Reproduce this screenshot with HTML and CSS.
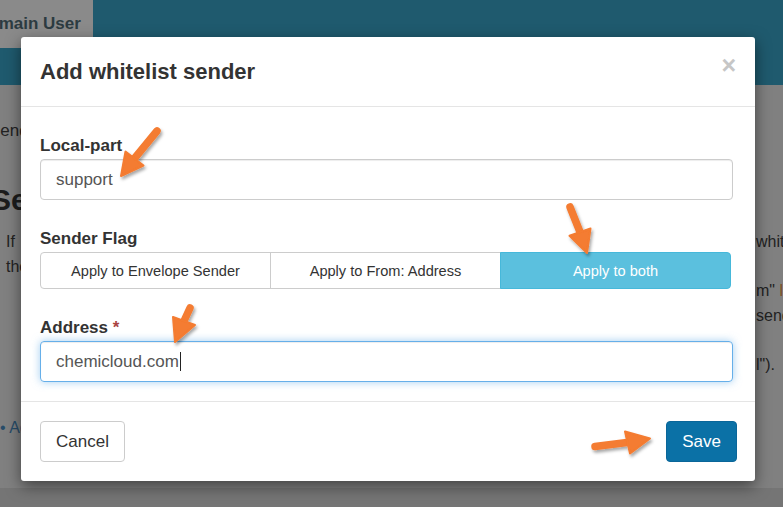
FILE: index.html
```html
<!DOCTYPE html>
<html lang="en">
<head>
<meta charset="utf-8">
<title>Add whitelist sender</title>
<link rel="stylesheet" href="styles.css">
</head>
<body>
<div class="page">
  <header class="topbar">
    <div class="tab">Domain User</div>
  </header>
  <main class="content">
    <div class="crumb">Sender</div>
    <h1 class="heading">Sender</h1>
    <div class="para">
      <span>If</span><span>whitelist</span>
      <span>the</span><span></span>
      <span></span><span>m" <span class="code">l</span></span>
      <span></span><span>sender</span>
      <span></span><span></span>
      <span></span><span>l").</span>
    </div>
    <div class="add-link">&bull; Add</div>
  </main>
  <footer class="page-foot"></footer>
</div>

<div class="modal">
  <div class="modal-header">
    <h4 class="modal-title">Add whitelist sender</h4>
    <span class="close">&times;</span>
  </div>
  <div class="modal-body">
    <div class="form-group">
      <label class="label">Local-part</label>
      <div class="input">support</div>
    </div>
    <div class="form-group">
      <label class="label">Sender Flag</label>
      <div class="btn-group">
        <div class="seg">Apply to Envelope Sender</div>
        <div class="seg">Apply to From: Address</div>
        <div class="seg active">Apply to both</div>
      </div>
    </div>
    <div class="form-group">
      <label class="label">Address <span class="req">*</span></label>
      <div class="input focus">chemicloud.com<span class="caret"></span></div>
    </div>
  </div>
  <div class="modal-footer">
    <div class="btn btn-default">Cancel</div>
    <div class="btn btn-primary">Save</div>
  </div>
</div>

<svg class="arrows" width="783" height="507" viewBox="0 0 783 507" aria-hidden="true">
  <defs>
    <filter id="sh" x="-20%" y="-20%" width="140%" height="140%">
      <feDropShadow dx="1.5" dy="2.5" stdDeviation="1.8" flood-color="#000" flood-opacity="0.35"/>
    </filter>
  </defs>
  <g filter="url(#sh)" fill="#f47b30" stroke="#f47b30" stroke-linecap="round" stroke-linejoin="round">
    <line x1="157" y1="131" x2="134" y2="159" stroke-width="7.5"/>
    <polygon points="121,176 143.5,165.5 125.5,151.5" stroke-width="2"/>

    <line x1="570" y1="207" x2="580" y2="232" stroke-width="7.5"/>
    <polygon points="587,253 590.5,228.5 569.5,235.8" stroke-width="2"/>

    <line x1="190" y1="308" x2="184" y2="321" stroke-width="7.5"/>
    <polygon points="175,342 173,317 195,325" stroke-width="2"/>

    <line x1="595" y1="446.5" x2="627" y2="442.5" stroke-width="7.5"/>
    <polygon points="650,438.5 625,431.5 630,453.5" stroke-width="2"/>
  </g>
</svg>
</body>
</html>
```

FILE: styles.css
```css
* {
  box-sizing: border-box;
}

html,
body {
  margin: 0;
  padding: 0;
}

body {
  width: 783px;
  height: 507px;
  overflow: hidden;
  position: relative;
  background: #808080;
  font-family: "Liberation Sans", Arial, sans-serif;
  color: #1e1e1e;
}

/* ---------- dimmed background page ---------- */
.page {
  display: flex;
  flex-direction: column;
  height: 100%;
  white-space: nowrap;
}

.topbar {
  height: 85px;
  flex: none;
  background: #1f5a6e;
  display: flex;
  align-items: flex-start;
}

.tab {
  height: 48px;
  line-height: 48px;
  margin-left: -24px;
  padding-right: 12px;
  background: #8a8a8a;
  font-size: 17px;
  font-weight: bold;
  color: #2c3b41;
}

.content {
  flex: 1;
  display: flex;
  flex-direction: column;
  align-items: flex-start;
}

.crumb {
  margin-top: 36px;
  margin-left: -11px;
  font-size: 17px;
  line-height: 20px;
  color: #222;
}

.heading {
  margin: 41px 0 0 -9px;
  font-size: 30px;
  line-height: 36px;
  font-weight: bold;
  color: #1c1c1c;
}

.para {
  margin-top: 12px;
  padding-left: 6px;
  display: grid;
  grid-template-columns: 750px max-content;
  grid-auto-rows: 24.6px;
  font-size: 16px;
  line-height: 24.6px;
  color: #222;
}

.code {
  color: #7d4f24;
}

.add-link {
  margin-top: 38px;
  font-size: 16px;
  line-height: 24.6px;
  color: #284c69;
}

.page-foot {
  height: 19px;
  flex: none;
  background: #757575;
}

/* ---------- modal ---------- */
.modal {
  position: absolute;
  left: 21px;
  top: 37px;
  width: 734px;
  background: #fff;
  border-radius: 3px;
  box-shadow: 0 5px 15px rgba(0, 0, 0, 0.5);
  color: #333;
}

.modal-header {
  height: 70px;
  padding: 0 19px;
  display: flex;
  align-items: center;
  justify-content: space-between;
  border-bottom: 1px solid #e5e5e5;
}

.modal-title {
  margin: 0;
  font-size: 22px;
  line-height: 24px;
  font-weight: bold;
  color: #333;
}

.close {
  align-self: flex-start;
  margin-top: 16px;
  font-size: 25px;
  line-height: 1;
  font-weight: bold;
  color: #c6c6c6;
}

.modal-body {
  padding: 29px 22px 19px 19px;
}

.form-group {
  margin-bottom: 29px;
}

.form-group:last-child {
  margin-bottom: 0;
}

.label {
  display: block;
  margin-bottom: 3px;
  font-size: 17px;
  line-height: 20px;
  font-weight: bold;
  color: #333;
}

.req {
  color: #a94442;
  font-weight: bold;
}

.input {
  height: 41px;
  padding: 0 15px;
  display: flex;
  align-items: center;
  border: 1px solid #ccc;
  border-radius: 4px;
  box-shadow: inset 0 1px 1px rgba(0, 0, 0, 0.075);
  font-size: 17px;
  color: #555;
}

.input.focus {
  border-color: #66afe9;
  box-shadow: inset 0 1px 1px rgba(0, 0, 0, 0.075), 0 0 8px rgba(102, 175, 233, 0.6);
}

.caret {
  width: 1px;
  height: 19px;
  margin-left: 1px;
  background: #222;
}

.btn-group {
  display: flex;
  height: 37px;
  margin-right: 2px;
}

.seg {
  flex: 1;
  display: flex;
  align-items: center;
  justify-content: center;
  border: 1px solid #ccc;
  background: #fff;
  font-size: 14.6px;
  color: #333;
}

.seg + .seg {
  margin-left: -1px;
}

.seg:first-child {
  border-radius: 4px 0 0 4px;
}

.seg:last-child {
  border-radius: 0 4px 4px 0;
}

.seg.active {
  background: #5bc0de;
  border-color: #46b8da;
  color: #fff;
}

.modal-footer {
  border-top: 1px solid #e5e5e5;
  padding: 19px 18px 19px 19px;
  display: flex;
  justify-content: space-between;
}

.btn {
  height: 41px;
  display: flex;
  align-items: center;
  justify-content: center;
  border-radius: 4px;
  font-size: 17px;
}

.btn-default {
  width: 85px;
  border: 1px solid #ccc;
  background: #fff;
  color: #333;
}

.btn-primary {
  width: 71px;
  border: 1px solid #0a6699;
  background: #0b71a6;
  color: #fff;
}

/* ---------- annotation arrows ---------- */
.arrows {
  position: absolute;
  left: 0;
  top: 0;
  pointer-events: none;
}
```
